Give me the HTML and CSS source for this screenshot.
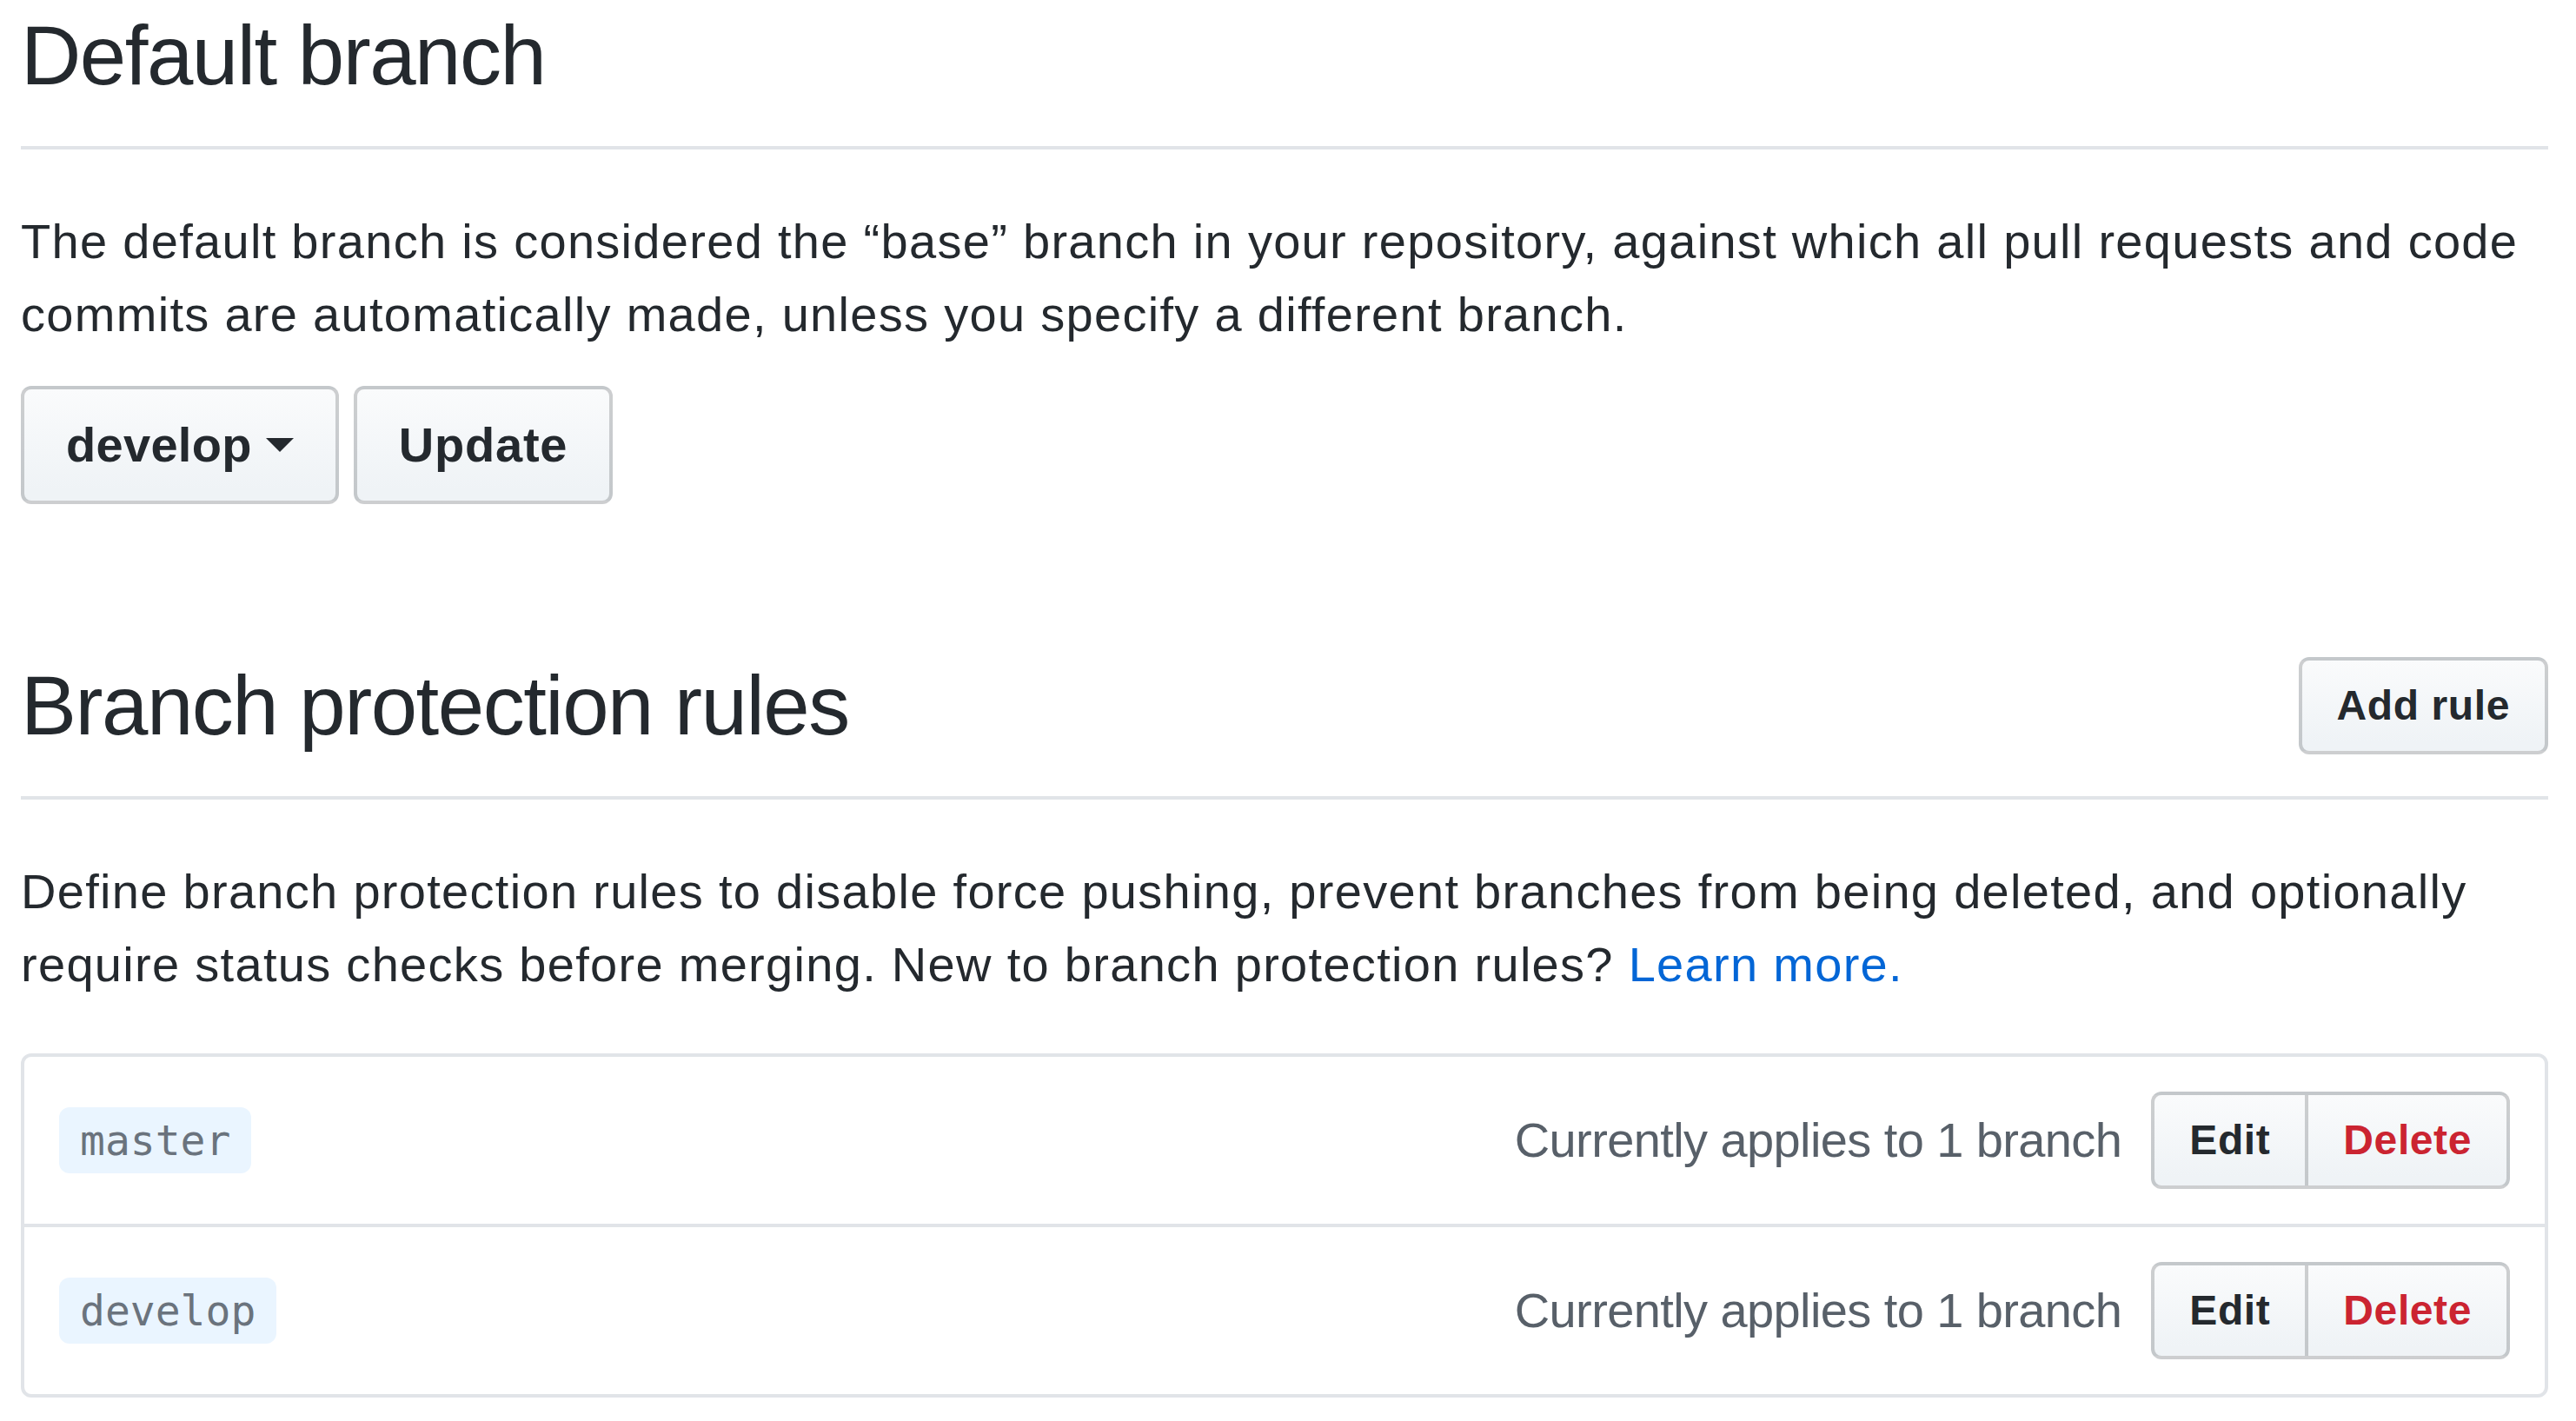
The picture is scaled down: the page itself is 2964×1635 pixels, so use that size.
FILE: index.html
```html
<!DOCTYPE html>
<html>
<head>
<meta charset="utf-8">
<link rel="stylesheet" href="styles.css">
</head>
<body>
<div class="page">
  <div class="subhead subhead-first">
    <h2 class="subhead-heading">Default branch</h2>
  </div>
  <p class="text">The default branch is considered the “base” branch in your repository, against which all pull requests and code commits are automatically made, unless you specify a different branch.</p>
  <div class="branch-form">
    <button class="btn" type="button">develop<span class="dropdown-caret"></span></button>
    <button class="btn btn-update" type="button">Update</button>
  </div>

  <div class="subhead subhead-spacious">
    <h2 class="subhead-heading">Branch protection rules</h2>
    <div class="subhead-actions">
      <button class="btn btn-sm" type="button">Add rule</button>
    </div>
  </div>
  <p class="text text-rules">Define branch protection rules to disable force pushing, prevent branches from being deleted, and optionally require status checks before merging. New to branch protection rules? <a class="link" href="#">Learn more.</a></p>

  <div class="box">
    <div class="box-row">
      <code class="branch-name">master</code>
      <div class="row-actions">
        <span class="applies">Currently applies to 1 branch</span>
        <div class="btn-group">
          <button class="btn btn-sm" type="button">Edit</button>
          <button class="btn btn-sm btn-danger" type="button">Delete</button>
        </div>
      </div>
    </div>
    <div class="box-row">
      <code class="branch-name">develop</code>
      <div class="row-actions">
        <span class="applies">Currently applies to 1 branch</span>
        <div class="btn-group">
          <button class="btn btn-sm" type="button">Edit</button>
          <button class="btn btn-sm btn-danger" type="button">Delete</button>
        </div>
      </div>
    </div>
  </div>
</div>
</body>
</html>
```
FILE: styles.css
```css
html, body {
  margin: 0;
  padding: 0;
  background: #ffffff;
}

body {
  font-family: "Liberation Sans", Arial, sans-serif;
  color: #24292e;
  font-size: 56px;
  line-height: 84px;
}

.page {
  width: 2908px;
  padding-left: 24px;
}

.subhead {
  display: flex;
  align-items: center;
  padding-bottom: 32px;
  margin-bottom: 64px;
  border-bottom: 4px solid #e1e4e8;
}

.subhead-first {
  margin-top: -8px;
}

.subhead-spacious {
  margin-top: 160px;
}

.subhead-heading {
  flex: 1 1 auto;
  margin: 0;
  font-size: 96px;
  line-height: 144px;
  font-weight: 400;
  letter-spacing: -1.5px;
}

.subhead-actions {
  margin: 16px 0 16px 16px;
}

.text {
  margin: 0 0 40px 0;
  letter-spacing: 1.3px;
}

.text-rules {
  margin-bottom: 60px;
}

.link {
  color: #0366d6;
  text-decoration: none;
}

.branch-form {
  display: flex;
  gap: 17px;
}

.btn {
  display: inline-flex;
  align-items: center;
  font-family: "Liberation Sans", Arial, sans-serif;
  font-size: 56px;
  line-height: 80px;
  font-weight: 700;
  color: #24292e;
  padding: 24px 48px;
  border: 4px solid rgba(27, 31, 35, 0.2);
  border-radius: 12px;
  background-color: #eff3f6;
  background-image: linear-gradient(-180deg, #fafbfc 0%, #eff3f6 90%);
  cursor: pointer;
  white-space: nowrap;
  letter-spacing: 0.3px;
}

.btn-update {
  letter-spacing: 0.8px;
}

.btn-sm {
  font-size: 48px;
  padding: 12px 40px;
  letter-spacing: 0.6px;
}

.btn-danger {
  color: #cb2431;
}

.dropdown-caret {
  display: inline-block;
  width: 0;
  height: 0;
  margin-left: 16px;
  border-style: solid;
  border-width: 16px 16px 0;
  border-color: #24292e transparent transparent;
}

.box {
  border: 4px solid #e1e4e8;
  border-radius: 12px;
}

.box-row {
  display: flex;
  align-items: center;
  justify-content: space-between;
  padding: 40px;
}

.box-row + .box-row {
  border-top: 4px solid #e1e4e8;
}

.branch-name {
  font-family: "DejaVu Sans Mono", "Liberation Mono", monospace;
  font-size: 48px;
  line-height: 60px;
  padding: 8px 24px;
  color: #6a737d;
  background: #eaf5ff;
  border-radius: 12px;
  letter-spacing: 0;
}

.row-actions {
  display: flex;
  align-items: center;
}

.applies {
  color: #586069;
  margin-right: 34px;
  letter-spacing: -0.6px;
}

.btn-group {
  display: flex;
}

.btn-group .btn {
  border-radius: 0;
}

.btn-group .btn:first-child {
  border-radius: 12px 0 0 12px;
}

.btn-group .btn:last-child {
  border-radius: 0 12px 12px 0;
  margin-left: -4px;
}
```
